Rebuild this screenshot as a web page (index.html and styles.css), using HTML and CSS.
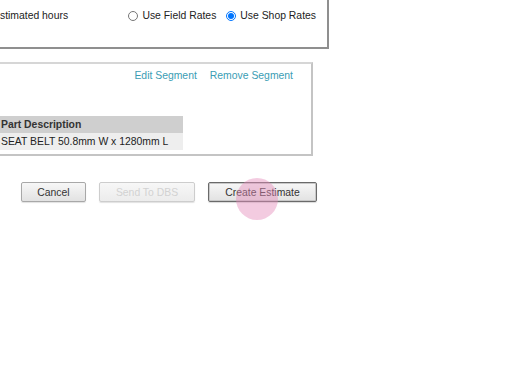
FILE: index.html
```html
<!DOCTYPE html>
<html>
<head>
<meta charset="utf-8">
<link rel="stylesheet" href="styles.css">
</head>
<body>
<div class="page">
  <div class="rates">
    <span class="label">Estimated hours</span>
    <div class="radios">
      <label class="opt"><input type="radio" name="rate"><span>Use Field Rates</span></label>
      <label class="opt"><input type="radio" name="rate" checked><span>Use Shop Rates</span></label>
    </div>
  </div>

  <div class="segment">
    <div class="links">
      <a href="#">Edit Segment</a>
      <a href="#">Remove Segment</a>
    </div>
    <table class="parts">
      <thead><tr><th>Part Description</th></tr></thead>
      <tbody><tr><td>SEAT BELT 50.8mm W x 1280mm L</td></tr></tbody>
    </table>
  </div>

  <div class="actions">
    <button class="btn btn-cancel">Cancel</button>
    <button class="btn btn-send" disabled>Send To DBS</button>
    <button class="btn btn-create">Create Estimate</button>
  </div>
</div>
<div class="touch"></div>
</body>
</html>
```

FILE: styles.css
```css
html, body {
  margin: 0;
  padding: 0;
  background: #fff;
  overflow: hidden;
}
body {
  font-family: "Liberation Sans", Arial, sans-serif;
  font-size: 10.4px;
  color: #222;
  width: 509px;
  height: 381px;
  position: relative;
}
.page {
  margin-left: -20px;
  margin-top: -30px;
}
.rates {
  box-sizing: border-box;
  width: 349px;
  height: 79px;
  border: 2px solid #8f8f8f;
  border-top-color: #b0b0b0;
  border-left-color: #b0b0b0;
  padding: 37px 11px 0 11px;
  display: flex;
  align-items: center;
  height: 79px;
}
.rates .label {
  line-height: 14px;
  align-self: flex-start;
}
.radios {
  margin-left: auto;
  display: flex;
  gap: 10px;
  align-self: flex-start;
  line-height: 14px;
}
.opt {
  display: flex;
  align-items: center;
  gap: 4px;
}
.opt input {
  width: 10px;
  height: 10px;
  margin: 0;
}
.segment {
  box-sizing: border-box;
  margin-top: 13px;
  width: 333px;
  height: 94px;
  border: 2px solid #c4c4c4;
  border-top-color: #d6d6d6;
  padding: 5px 18px 3px 0;
}
.links {
  display: flex;
  justify-content: flex-end;
  gap: 13px;
  line-height: 13px;
}
.links a {
  color: #3a9db4;
  text-decoration: none;
}
.parts {
  margin-top: 34px;
  border-collapse: collapse;
  width: 201px;
}
.parts th, .parts td {
  height: 17px;
  padding: 0 0 0 19px;
  text-align: left;
  font-size: 10.4px;
  line-height: 17px;
}
.parts th {
  background: #cfcfcf;
  font-weight: bold;
  color: #333;
}
.parts td {
  background: #eeeeee;
  color: #222;
}
.actions {
  margin-top: 26px;
  padding-left: 41px;
  display: flex;
  gap: 13px;
}
.btn {
  box-sizing: border-box;
  height: 20px;
  padding: 0;
  font-family: "Liberation Sans", Arial, sans-serif;
  font-size: 10.4px;
  color: #333;
  background: linear-gradient(#f7f7f7, #e2e2e2);
  border: 1px solid #a8a8a8;
  border-radius: 2px;
  box-shadow: 0 1px 1px rgba(0,0,0,0.12);
}
.btn-cancel { width: 65px; }
.btn-send {
  width: 96px;
  color: #d2d2d2;
  background: linear-gradient(#f7f7f7, #ececec);
  border-color: #cdcdcd;
}
.btn-create {
  width: 109px;
  border: 1px solid #6a6a6a;
  box-shadow: inset 0 0 0 1px #c8c8c8, 0 1px 1px rgba(0,0,0,0.15);
}
.touch {
  position: absolute;
  left: 236px;
  top: 178px;
  width: 42px;
  height: 42px;
  border-radius: 50%;
  background: rgba(228, 140, 186, 0.45);
  pointer-events: none;
}
```
